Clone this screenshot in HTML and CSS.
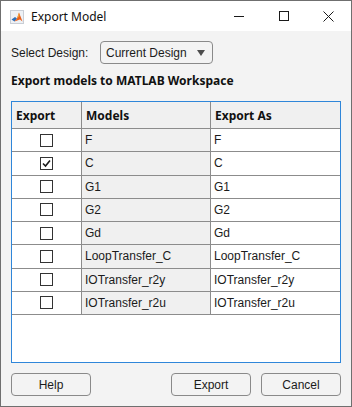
FILE: index.html
```html
<!DOCTYPE html>
<html lang="en">
<head>
    <meta charset="UTF-8">
    <title>Export Model</title>
    <link rel="stylesheet" href="styles.css">
</head>
<body>
    <div class="window">
        <div class="titlebar">
            <svg class="app-icon" width="14" height="14" viewBox="0 0 14 14">
                <rect x="0.5" y="0.5" width="13" height="13" fill="#eef1f5" stroke="#c9ced6"/>
                <path d="M1.5 9.5 L5 7 L7 8.5 L4.5 11.5 Z" fill="#2f6fb8"/>
                <path d="M4.5 11.5 L7 8.5 L9 2.5 L12.5 11.5 L10 9.5 Z" fill="#e8601c"/>
                <path d="M7 8.5 L9 2.5 L9.5 6 Z" fill="#f4a43a"/>
            </svg>
            <span class="title">Export Model</span>
            <div class="controls">
                <span class="ctl"><svg width="10" height="10" viewBox="0 0 10 10"><path d="M0 5.5 H10" stroke="#1a1a1a" stroke-width="1"/></svg></span>
                <span class="ctl"><svg width="10" height="10" viewBox="0 0 10 10"><rect x="0.5" y="0.5" width="9" height="9" fill="none" stroke="#1a1a1a"/></svg></span>
                <span class="ctl"><svg width="11" height="11" viewBox="0 0 11 11"><path d="M0.5 0.5 L10.5 10.5 M10.5 0.5 L0.5 10.5" stroke="#1a1a1a" stroke-width="1"/></svg></span>
            </div>
        </div>

        <div class="content">
            <div class="select-row">
                <label class="label">Select Design:</label>
                <div class="dropdown">
                    <span>Current Design</span>
                    <span class="arrow"></span>
                </div>
            </div>

            <div class="heading">Export models to MATLAB Workspace</div>

            <div class="table">
                <div class="row head">
                    <div class="cell c1">Export</div>
                    <div class="cell c2">Models</div>
                    <div class="cell c3">Export As</div>
                </div>
                <div class="row">
                    <div class="cell c1"><span class="box"></span></div>
                    <div class="cell c2">F</div>
                    <div class="cell c3">F</div>
                </div>
                <div class="row">
                    <div class="cell c1"><span class="box checked"><svg width="11" height="11" viewBox="0 0 11 11"><path d="M2 5.5 L4.5 8 L9 2.5" fill="none" stroke="#1a1a1a" stroke-width="1.6"/></svg></span></div>
                    <div class="cell c2">C</div>
                    <div class="cell c3">C</div>
                </div>
                <div class="row">
                    <div class="cell c1"><span class="box"></span></div>
                    <div class="cell c2">G1</div>
                    <div class="cell c3">G1</div>
                </div>
                <div class="row">
                    <div class="cell c1"><span class="box"></span></div>
                    <div class="cell c2">G2</div>
                    <div class="cell c3">G2</div>
                </div>
                <div class="row">
                    <div class="cell c1"><span class="box"></span></div>
                    <div class="cell c2">Gd</div>
                    <div class="cell c3">Gd</div>
                </div>
                <div class="row">
                    <div class="cell c1"><span class="box"></span></div>
                    <div class="cell c2">LoopTransfer_C</div>
                    <div class="cell c3">LoopTransfer_C</div>
                </div>
                <div class="row">
                    <div class="cell c1"><span class="box"></span></div>
                    <div class="cell c2">IOTransfer_r2y</div>
                    <div class="cell c3">IOTransfer_r2y</div>
                </div>
                <div class="row">
                    <div class="cell c1"><span class="box"></span></div>
                    <div class="cell c2">IOTransfer_r2u</div>
                    <div class="cell c3">IOTransfer_r2u</div>
                </div>
            </div>

            <div class="buttons">
                <button class="btn">Help</button>
                <div class="right">
                    <button class="btn">Export</button>
                    <button class="btn">Cancel</button>
                </div>
            </div>
        </div>
    </div>
</body>
</html>
```

FILE: styles.css
```css
body {
    margin: 0;
    font-family: "Liberation Sans", Arial, sans-serif;
    font-size: 12px;
    color: #1b1b1b;
    background: #ffffff;
}

.window {
    width: 352px;
    height: 407px;
    box-sizing: border-box;
    border: 1px solid #6f6f6f;
    background-color: #f3f3f3;
    display: flex;
    flex-direction: column;
}

.titlebar {
    height: 30px;
    background-color: #ffffff;
    display: flex;
    align-items: center;
}

.app-icon {
    margin-left: 9px;
    margin-top: 1px;
}

.title {
    margin-left: 7px;
    font-family: "Noto Sans", sans-serif;
    font-size: 12px;
    color: #111;
}

.controls {
    margin-left: auto;
    display: flex;
    height: 100%;
}

.ctl {
    width: 45px;
    display: flex;
    align-items: center;
    justify-content: center;
}

.content {
    padding: 10px 10px 0 10px;
    flex: 1;
    display: flex;
    flex-direction: column;
}

.select-row {
    display: flex;
    align-items: center;
    height: 23px;
}

.label {
    width: 89px;
}

.dropdown {
    width: 113px;
    height: 23px;
    box-sizing: border-box;
    border: 1px solid #8a8a8a;
    border-radius: 4px;
    display: flex;
    align-items: center;
    padding-left: 5px;
}

.arrow {
    margin-left: auto;
    margin-right: 7px;
    width: 0;
    height: 0;
    border-left: 4px solid transparent;
    border-right: 4px solid transparent;
    border-top: 6px solid #4d4d4d;
}

.heading {
    font-family: "Noto Sans", sans-serif;
    font-weight: bold;
    font-size: 12px;
    margin-top: 9px;
    height: 16px;
    line-height: 16px;
    color: #111;
}

.table {
    margin-top: 12px;
    width: 330px;
    height: 262px;
    box-sizing: border-box;
    border: 1px solid #2f86d9;
    background-color: #ffffff;
}

.row {
    display: grid;
    grid-template-columns: 70px 129px 129px;
    height: 23.25px;
    box-sizing: border-box;
    border-bottom: 1px solid #8c8c8c;
}

.row.head {
    height: 27px;
    background-color: #f0f0f0;
}

.head .cell {
    font-family: "Noto Sans", sans-serif;
    font-weight: bold;
    color: #111;
    padding-left: 4px;
}

.cell {
    display: flex;
    align-items: center;
    padding-left: 3px;
    border-right: 1px solid #8c8c8c;
    white-space: nowrap;
    overflow: hidden;
}

.cell.c3 {
    border-right: none;
}

.c2 {
    background-color: #f0f0f0;
}

.row .c1 {
    justify-content: center;
    padding-left: 0;
}

.head .c1 {
    justify-content: flex-start;
    padding-left: 4px;
}

.box {
    width: 13px;
    height: 13px;
    box-sizing: border-box;
    border: 1px solid #333333;
    background: #ffffff;
    display: flex;
    align-items: center;
    justify-content: center;
}

.buttons {
    margin-top: 10px;
    display: flex;
    justify-content: space-between;
}

.right {
    display: flex;
    gap: 10px;
}

.btn {
    width: 80px;
    height: 23px;
    font-family: "Liberation Sans", Arial, sans-serif;
    font-size: 12px;
    color: #1b1b1b;
    background-color: #f3f3f3;
    border: 1px solid #8a8a8a;
    border-radius: 4px;
    padding: 0;
}
```
